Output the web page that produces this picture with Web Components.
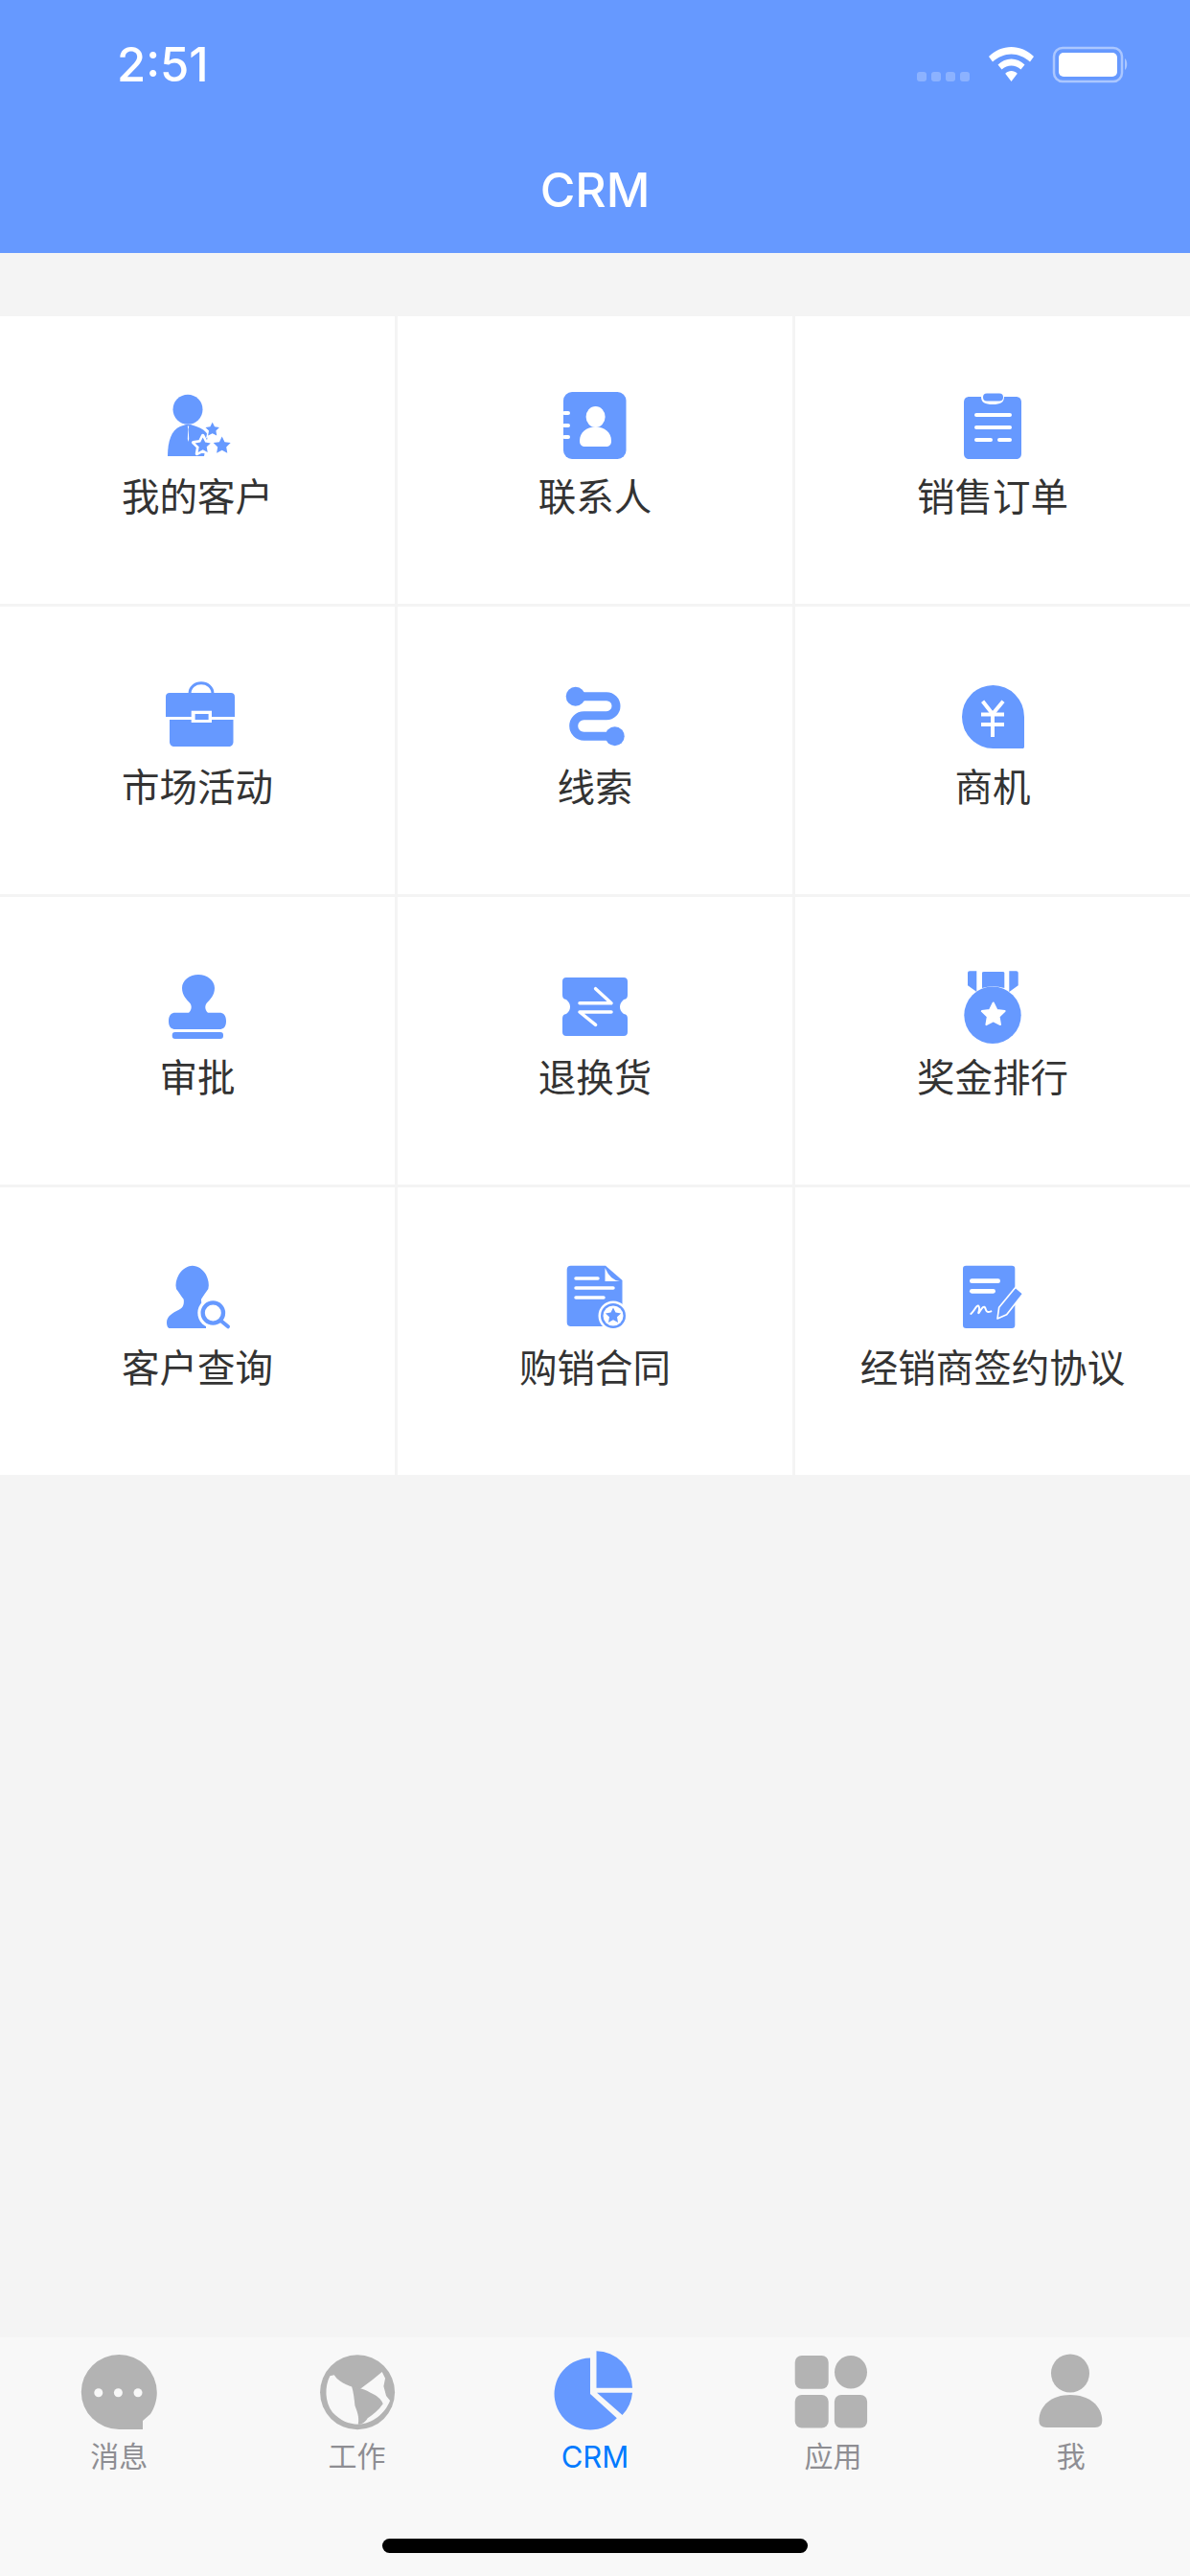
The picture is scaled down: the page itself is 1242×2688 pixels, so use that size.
<!DOCTYPE html>
<html lang="zh">
<head>
<meta charset="utf-8">
<title>CRM</title>
<style>
  html, body { margin: 0; padding: 0; }
  body {
    width: 1242px;
    height: 2688px;
    display: flex;
    flex-direction: column;
    background: #f4f4f4;
    font-family: "Noto Sans CJK SC", "Noto Sans", sans-serif;
  }
</style>
</head>
<body>
  <crm-header title="CRM" time="2:51"></crm-header>

  <crm-grid>
    <crm-tile icon="customer">我的客户</crm-tile>
    <crm-tile icon="contact">联系人</crm-tile>
    <crm-tile icon="order">销售订单</crm-tile>
    <crm-tile icon="market">市场活动</crm-tile>
    <crm-tile icon="clue">线索</crm-tile>
    <crm-tile icon="chance">商机</crm-tile>
    <crm-tile icon="stamp">审批</crm-tile>
    <crm-tile icon="exchange">退换货</crm-tile>
    <crm-tile icon="medal">奖金排行</crm-tile>
    <crm-tile icon="search">客户查询</crm-tile>
    <crm-tile icon="contract">购销合同</crm-tile>
    <crm-tile icon="sign">经销商签约协议</crm-tile>
  </crm-grid>

  <crm-tabbar>
    <crm-tab icon="message">消息</crm-tab>
    <crm-tab icon="globe">工作</crm-tab>
    <crm-tab icon="pie" active>CRM</crm-tab>
    <crm-tab icon="apps">应用</crm-tab>
    <crm-tab icon="me">我</crm-tab>
  </crm-tabbar>

<script>
// five pointed star, r is the outer radius
function star(cx, cy, r) {
  const pts = [];
  for (let i = 0; i < 10; i++) {
    const rad = i % 2 ? r * 0.5 : r;
    const a = -Math.PI / 2 + i * Math.PI / 5;
    pts.push((cx + rad * Math.cos(a)).toFixed(1) + ',' + (cy + rad * Math.sin(a)).toFixed(1));
  }
  return pts.join(' ');
}

// all icons are drawn in a 90x90 box, --cut is the colour of the holes
const ICONS = {
  customer: `
    <circle cx="35" cy="27.3" r="15.5"/>
    <path d="M14 76C14 60 18 49 27 45L33 43H38L44 45C50 47 54 50 56 54L52 76Z"/>
    <path d="M34.8 44.5L35.3 48L34.8 58L35.5 61L36.2 58L35.7 48L36.2 44.5Z" fill="var(--cut)"/>
    <polygon points="${star(50.7, 65, 10.5)}" fill="var(--cut)" stroke="var(--cut)" stroke-width="3.5" stroke-linejoin="round"/>
    <polygon points="${star(60.7, 48.3, 9.5)}" stroke="var(--cut)" stroke-width="1.5"/>
    <polygon points="${star(70.7, 65, 9.5)}"/>
    <polygon points="${star(50.7, 65, 8.5)}"/>`,
  contact: `
    <rect x="12" y="9" width="65.5" height="70" rx="9"/>
    <g fill="var(--cut)">
      <rect x="11" y="29" width="8" height="4" rx="2"/>
      <rect x="11" y="42" width="8" height="4" rx="2"/>
      <rect x="11" y="54" width="8" height="4" rx="2"/>
      <ellipse cx="45.6" cy="35" rx="10" ry="11"/>
      <path d="M29 60C29 51 36 45.5 45.6 45.5C55 45.5 62 51 62 60C62 64 60 66 56 66H35C31 66 29 64 29 60Z"/>
    </g>`,
  order: `
    <path d="M21 14H33C33 20 37 22 45 22C53 22 57 20 57 14H69C73 14 75 16 75 20V73C75 77 73 79 69 79H21C17 79 15 77 15 73V20C15 16 17 14 21 14Z"/>
    <rect x="35" y="10.5" width="21" height="8" rx="4"/>
    <g stroke="var(--cut)" stroke-width="4" stroke-linecap="round">
      <path d="M28 33H63"/><path d="M28 46H63"/><path d="M28 59H43"/><path d="M52 59H63"/>
    </g>`,
  market: `
    <path d="M37 21C37 6 61 6 61 21" fill="none" stroke="currentColor" stroke-width="3"/>
    <path d="M16 20H80C82.5 20 84 21.5 84 24V45H12V24C12 21.5 13.5 20 16 20Z"/>
    <path d="M16 48H82.5V71C82.5 74 80.5 76 77.5 76H21C18 76 16 74 16 71Z"/>
    <rect x="38.7" y="38.7" width="21.3" height="12.3" fill="var(--cut)"/>
    <rect x="42.6" y="42" width="14" height="6"/>`,
  clue: `
    <path d="M24.7 23.7H57A10 10 0 0 1 57 43.7H33.5A10.8 10.8 0 0 0 33.5 65.3H65.7" fill="none" stroke="currentColor" stroke-width="9"/>
    <circle cx="24.7" cy="23.7" r="10"/>
    <circle cx="65.7" cy="65.3" r="10"/>`,
  chance: `
    <path d="M76 78H45.5A32.5 33 0 1 1 78 45V76C78 77.5 77.5 78 76 78Z"/>
    <g fill="none" stroke="var(--cut)" stroke-width="4">
      <path d="M34.6 28.7L45 42L56 28.7"/><path d="M45 42V66"/><path d="M33 42.5H57"/><path d="M33 53H57"/>
    </g>`,
  stamp: `
    <path d="M46 11C55 11 63 17 63 25C63 33 58 37 54.5 41C52.5 44 53 48 56 50.7H68C72 50.7 75 53 75 59.5C75 66 72 68 68 68H22C18 68 15 66 15 59.5C15 53 18 50.7 22 50.7H36C39 48 39.5 44 37.5 41C34 37 29 33 29 25C29 17 37 11 46 11Z"/>
    <rect x="18.7" y="71" width="53.3" height="7" rx="3"/>`,
  exchange: `
    <path d="M15 14H75C77.5 14 79 15.5 79 18V32C79 35 78 36.5 75 37C72 39.5 71 42 71 44.5C71 47 72 50 75 52C78 52.5 79 54 79 57V71C79 73.5 77.5 75 75 75H15C12.5 75 11 73.5 11 71V57C11 54 12 52.5 15 52C18 50 19 47 19 44.5C19 42 18 39.5 15 37C12 36.5 11 35 11 32V18C11 15.5 12.5 14 15 14Z"/>
    <g fill="none" stroke="var(--cut)" stroke-width="3.5" stroke-linecap="round" stroke-linejoin="round">
      <path d="M45.6 25.7L62 40.7H29"/><path d="M62 50H29L45.6 63.3"/>
    </g>`,
  medal: `
    <circle cx="45" cy="53.3" r="29.7"/>
    <path d="M19 9Q19 7.3 21 7.3H28.3V29L19 22.3Z"/>
    <path d="M34 9Q34 8 36 8H55.3Q57.3 8 57.3 9V25Q45.5 21.5 34 25Z"/>
    <path d="M62.3 7.3H69.7Q71.7 7.3 71.7 9V22.3L62.3 29Z"/>
    <polygon points="${star(45.7, 53, 12.5)}" fill="var(--cut)" stroke="var(--cut)" stroke-width="2" stroke-linejoin="round"/>`,
  search: `
    <g transform="translate(-1 -4) scale(.3333)">
      <path d="M42 225C42 205 60 195 80 185C95 178 97 165 95 152C85 140 80 130 72 120C68 105 72 90 80 75C92 55 110 47 122 47C140 47 155 58 165 75C172 90 176 105 172 120C165 130 158 140 150 152C150 165 152 175 165 190L165 243H52C45 243 42 235 42 225Z"/>
      <circle cx="187" cy="195" r="48" fill="var(--cut)"/>
      <circle cx="187" cy="195" r="32" fill="none" stroke="currentColor" stroke-width="13"/>
      <path d="M212 220L234 238" fill="none" stroke="currentColor" stroke-width="12" stroke-linecap="round"/>
    </g>`,
  contract: `
    <path d="M19.7 11.7H56L73.5 27V71C73.5 73.5 72 75 69.5 75H19.7C17.2 75 15.7 73.5 15.7 71V15.7C15.7 13.2 17.2 11.7 19.7 11.7Z"/>
    <path d="M55.5 14V28H71Q61 27 55.5 14Z" fill="var(--cut)"/>
    <g stroke="var(--cut)" stroke-width="3.5" stroke-linecap="round">
      <path d="M25 25H48"/><path d="M25 35H64"/><path d="M25 45H54"/>
    </g>
    <circle cx="64" cy="64" r="15.5" fill="var(--cut)"/>
    <circle cx="64" cy="64" r="13"/>
    <circle cx="64" cy="64" r="10.5" fill="var(--cut)"/>
    <polygon points="${star(64, 64, 8.5)}"/>`,
  sign: `
    <g transform="translate(-11 -4) scale(.3333)">
      <rect x="75" y="47" width="163" height="196" rx="10"/>
      <g fill="none" stroke="var(--cut)" stroke-linecap="round" stroke-linejoin="round">
        <path d="M103 95H185" stroke-width="14"/>
        <path d="M103 127H170" stroke-width="14"/>
        <path d="M100 198C110 190 120 165 125 175C130 185 120 198 125 195C135 180 140 170 145 180C148 190 150 195 163 190" stroke-width="6"/>
      </g>
      <polygon points="183,213 188,178 240,115 263,135 212,200" stroke="var(--cut)" stroke-width="5" stroke-linejoin="round"/>
    </g>`,
  message: `
    <path d="M45.3 7A39.5 39.5 0 0 1 84.8 46.5C84.8 55 82 63 78 69L70 76V85H45.3A39.5 39 0 0 1 45.3 7Z"/>
    <g fill="var(--cut)">
      <circle cx="23.8" cy="46.7" r="4.5"/>
      <circle cx="44.4" cy="46.7" r="4.5"/>
      <circle cx="65" cy="46.7" r="4.5"/>
    </g>`,
  globe: `
    <g transform="translate(-7.6 -10) scale(.3333)">
      <circle cx="158" cy="169" r="117"/>
      <path fill="var(--cut)" d="M72 118C55 150 55 200 80 232C105 258 130 269 160 269C205 268 245 235 260 195L248 180L240 150L245 125L235 105L205 130L165 160C140 150 105 145 85 115Z"/>
      <path d="M150 210C148 190 146 170 140 150L172 158C185 162 195 168 205 173C225 183 235 195 238 205C225 225 205 240 190 250C180 268 165 270 160 270C165 245 155 225 150 210Z"/>
    </g>`,
  pie: `
    <path d="M40 10.5A37.5 37.5 0 1 0 67.8 73.2L40 48Z"/>
    <path d="M46.5 3.3A37.5 38.4 0 0 1 84 41.7H46.5Z"/>
    <path d="M47 46.7H84A38 38 0 0 1 73.5 70Z"/>`,
  apps: `
    <rect x="5.7" y="8" width="35" height="34.7" rx="7"/>
    <ellipse cx="64" cy="25.3" rx="17" ry="17.3"/>
    <rect x="5.7" y="49" width="35" height="34.5" rx="7"/>
    <rect x="46.9" y="49" width="34.2" height="34.5" rx="7"/>`,
  me: `
    <circle cx="44" cy="26.5" r="20"/>
    <path d="M11.4 76C11.4 60 25 49 44 49C63 49 77.3 60 77.3 76Q77.3 83 70 83H19Q11.4 83 11.4 76Z"/>`
};

class CrmIcon extends HTMLElement {
  connectedCallback() {
    const name = this.getAttribute('name');
    this.attachShadow({ mode: 'open' }).innerHTML = `
      <style>
        :host { display: block; width: 90px; height: 90px; }
        svg { display: block; fill: currentColor; }
      </style>
      <svg width="90" height="90" viewBox="0 0 90 90">${ICONS[name] || ''}</svg>
    `;
  }
}

class CrmHeader extends HTMLElement {
  connectedCallback() {
    this.attachShadow({ mode: 'open' }).innerHTML = `
      <style>
        :host { display: block; background: #6699ff; color: #fff; font-family: Inter, "Liberation Sans", sans-serif; }
        .status {
          box-sizing: border-box;
          height: 132px;
          padding: 3px 62px 0 122px;
          display: flex;
          align-items: center;
          justify-content: space-between;
        }
        .time { font-size: 49px; font-weight: 500; }
        .title {
          height: 132px;
          display: flex;
          align-items: center;
          justify-content: center;
          font-size: 50px;
          font-weight: 500;
        }
        svg { display: block; }
      </style>
      <div class="status">
        <span class="time">${this.getAttribute('time')}</span>
        <svg width="223" height="40" viewBox="957 48 223 40">
          <g fill="#fff" opacity=".25">
            <rect x="957" y="75" width="10" height="10" rx="3"/>
            <rect x="972" y="75" width="10" height="10" rx="3"/>
            <rect x="987" y="75" width="10" height="10" rx="3"/>
            <rect x="1002" y="75" width="10" height="10" rx="3"/>
          </g>
          <path fill="#fff" d="M1055.5 49C1064 49 1072.5 52.5 1079 59L1075 64.5C1069.5 59.5 1062.5 56.5 1055.5 56.5C1048.5 56.5 1041.5 59.5 1036 64.5L1032 59C1038.5 52.5 1047 49 1055.5 49Z"/>
          <path fill="#fff" d="M1055.5 61.5C1060.5 61.5 1065.5 63.5 1069.5 67.5L1065.5 72.5C1062.5 70 1059 68.5 1055.5 68.5C1052 68.5 1048.5 70 1045.5 72.5L1041.5 67.5C1045.5 63.5 1050.5 61.5 1055.5 61.5Z"/>
          <path fill="#fff" d="M1055.5 74C1057.8 74 1060 75 1061.8 76.8L1055.5 85L1049.2 76.8C1051 75 1053.2 74 1055.5 74Z"/>
          <rect x="1100" y="50" width="71" height="35" rx="9" fill="none" stroke="#fff" stroke-opacity=".45" stroke-width="2.5"/>
          <rect x="1105" y="55" width="61" height="25" rx="5" fill="#fff"/>
          <path d="M1174 61C1177 63 1177 71 1174 73Z" fill="#fff" fill-opacity=".45"/>
        </svg>
      </div>
      <div class="title">${this.getAttribute('title')}</div>
    `;
  }
}

class CrmGrid extends HTMLElement {
  constructor() {
    super();
    this.attachShadow({ mode: 'open' }).innerHTML = `
      <style>
        :host {
          display: grid;
          grid-template-columns: repeat(3, 1fr);
          grid-auto-rows: 300px;
          gap: 3px;
          margin-top: 66px;
        }
      </style>
      <slot></slot>
    `;
  }
}

class CrmTile extends HTMLElement {
  connectedCallback() {
    this.attachShadow({ mode: 'open' }).innerHTML = `
      <style>
        :host {
          display: flex;
          flex-direction: column;
          align-items: center;
          background: #fff;
          padding-top: 70px;
          box-sizing: border-box;
          color: #333;
          font-size: 39.5px;
          line-height: 52px;
          font-weight: 400;
          --cut: #fff;
        }
        crm-icon { color: #6699ff; }
      </style>
      <crm-icon name="${this.getAttribute('icon')}"></crm-icon>
      <slot></slot>
    `;
  }
}

class CrmTabbar extends HTMLElement {
  constructor() {
    super();
    this.attachShadow({ mode: 'open' }).innerHTML = `
      <style>
        :host {
          display: block;
          margin-top: auto;
          height: 249px;
          padding-top: 11px;
          box-sizing: border-box;
          background: #f8f8f8;
        }
        .tabs { display: grid; grid-template-columns: repeat(5, 1fr); }
        .home {
          width: 444px;
          height: 15px;
          margin: 69px auto 0;
          border-radius: 8px;
          background: #000;
        }
      </style>
      <div class="tabs"><slot></slot></div>
      <div class="home"></div>
    `;
  }
}

class CrmTab extends HTMLElement {
  connectedCallback() {
    const active = this.hasAttribute('active');
    this.attachShadow({ mode: 'open' }).innerHTML = `
      <style>
        :host {
          display: flex;
          flex-direction: column;
          align-items: center;
          color: ${active ? '#007aff' : '#8e8e93'};
          font-size: ${active ? 31 : 30}px;
          line-height: 38px;
          font-weight: 400;
          --cut: #f8f8f8;
        }
        crm-icon { color: ${active ? '#6699ff' : '#b3b3b3'}; margin-bottom: 2px; }
        .label {
          height: 38px;
          line-height: ${active ? 44 : 38}px;
          font-family: ${active ? 'Inter, "Liberation Sans", sans-serif' : 'inherit'};
        }
      </style>
      <crm-icon name="${this.getAttribute('icon')}"></crm-icon>
      <span class="label"><slot></slot></span>
    `;
  }
}

customElements.define('crm-icon', CrmIcon);
customElements.define('crm-header', CrmHeader);
customElements.define('crm-grid', CrmGrid);
customElements.define('crm-tile', CrmTile);
customElements.define('crm-tabbar', CrmTabbar);
customElements.define('crm-tab', CrmTab);
</script>
</body>
</html>
